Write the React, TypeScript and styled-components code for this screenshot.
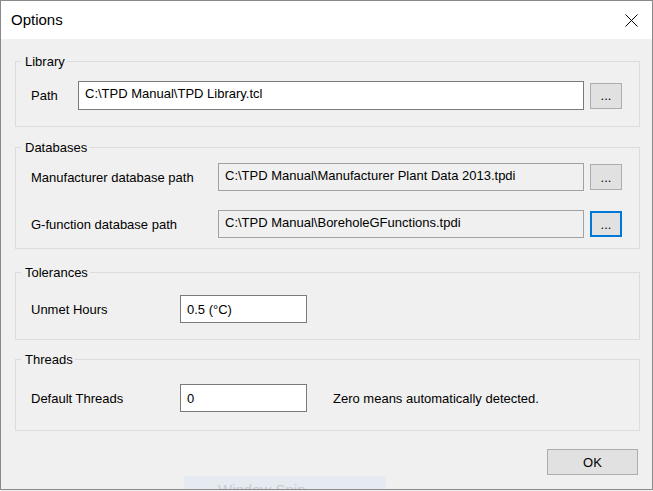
import React from 'react'
import styled, { createGlobalStyle } from 'styled-components'

const GlobalStyle = createGlobalStyle`
  html, body {
    margin: 0;
    padding: 0;
    background: #f0f0f0;
  }
  body {
    font-family: "Liberation Sans", Arial, sans-serif;
    font-size: 13px;
    color: #000;
  }
  * {
    box-sizing: border-box;
  }
`;

const Window = styled.div`
  position: relative;
  width: 653px;
  height: 490px;
  border: 1px solid #8a8a8a;
  background: #f0f0f0;
  display: flex;
  flex-direction: column;
  overflow: hidden;
`;

const TitleBar = styled.div`
  height: 38px;
  flex: 0 0 38px;
  background: #ffffff;
  display: flex;
  align-items: center;
  justify-content: space-between;
  padding: 0 14px 0 10px;
`;

const Title = styled.span`
  font-size: 15px;
  line-height: 18px;
  color: #000;
`;

const CloseIcon = styled.svg`
  display: block;
  width: 13px;
  height: 13px;
`;

const Content = styled.div`
  display: flex;
  flex-direction: column;
  padding: 0 12px 0 14px;
`;

const Group = styled.fieldset<{ $mt: number; $pt: number; $pb: number }>`
  margin: ${p => p.$mt}px 0 0 0;
  min-width: 0;
  border: 1px solid #dcdcdc;
  padding: ${p => p.$pt}px 17px ${p => p.$pb}px 15px;
`;

const Legend = styled.legend`
  font-size: 13px;
  line-height: 15px;
  height: 15px;
  padding: 0 2px 0 4px;
  margin-left: -10px;
  color: #000;
`;

const Rows = styled.div`
  display: flex;
  flex-direction: column;
  gap: 19px;
`;

const Row = styled.div<{ $cols: string; $gap?: number }>`
  display: grid;
  grid-template-columns: ${p => p.$cols};
  column-gap: ${p => p.$gap ?? 6}px;
  align-items: center;
`;

const Label = styled.span`
  font-size: 13px;
  line-height: 15px;
  white-space: nowrap;
`;

const TextBox = styled.input<{ $h?: number; $grey?: boolean; $mid?: boolean }>`
  display: block;
  width: 100%;
  height: ${p => p.$h ?? 28}px;
  margin: 0;
  border: 1px solid ${p => (p.$grey ? '#a2a2a2' : '#7a7a7a')};
  background: ${p => (p.$grey ? '#f0f0f0' : '#ffffff')};
  font-family: "Liberation Sans", Arial, sans-serif;
  font-size: 13px;
  color: #000;
  padding: ${p => (p.$mid ? '0 6px' : '0 6px 4px 6px')};
  outline: none;
`;

const BrowseButton = styled.button<{ $focused?: boolean }>`
  width: 32px;
  height: 26px;
  margin: 0;
  padding: 0;
  background: #e1e1e1;
  border: ${p => (p.$focused ? '2px solid #0078d7' : '1px solid #adadad')};
  font-family: "Liberation Sans", Arial, sans-serif;
  font-size: 13px;
  line-height: 15px;
  color: #000;
`;

const Note = styled.span`
  font-size: 13px;
  line-height: 15px;
  white-space: nowrap;
`;

const Footer = styled.div`
  display: flex;
  justify-content: flex-end;
  margin-top: 18px;
  padding-right: 2px;
`;

const OkButton = styled.button`
  width: 91px;
  height: 26px;
  margin: 0;
  padding: 0;
  background: #e1e1e1;
  border: 1px solid #adadad;
  font-family: "Liberation Sans", Arial, sans-serif;
  font-size: 13px;
  color: #000;
`;

const SnipTip = styled.div`
  position: absolute;
  left: 183px;
  top: 475px;
  width: 202px;
  height: 13px;
  overflow: hidden;
  background: #e6ebf1;
  padding: 5px 0 0 34px;
  font-family: "Liberation Sans", Arial, sans-serif;
  font-size: 15px;
  line-height: 17px;
  color: #c6cbd1;
  white-space: nowrap;
`;

export default function App() {
  return (
    <>
      <GlobalStyle />
      <Window>
        <TitleBar>
          <Title>Options</Title>
          <CloseIcon viewBox="0 0 13 13">
            <path d="M0.5 0.5 L12.5 12.5 M12.5 0.5 L0.5 12.5" stroke="#000" strokeWidth="1" fill="none" />
          </CloseIcon>
        </TitleBar>
        <Content>
          <Group $mt={15} $pt={12} $pb={16}>
            <Legend>Library</Legend>
            <Row $cols="41px 1fr 32px">
              <Label>Path</Label>
              <TextBox $h={29} readOnly value={'C:\\TPD Manual\\TPD Library.tcl'} />
              <BrowseButton>...</BrowseButton>
            </Row>
          </Group>

          <Group $mt={13} $pt={8} $pb={10}>
            <Legend>Databases</Legend>
            <Rows>
              <Row $cols="181px 1fr 32px">
                <Label>Manufacturer database path</Label>
                <TextBox $grey readOnly value={'C:\\TPD Manual\\Manufacturer Plant Data 2013.tpdi'} />
                <BrowseButton>...</BrowseButton>
              </Row>
              <Row $cols="181px 1fr 32px">
                <Label>G-function database path</Label>
                <TextBox $grey readOnly value={'C:\\TPD Manual\\BoreholeGFunctions.tpdi'} />
                <BrowseButton $focused>...</BrowseButton>
              </Row>
            </Rows>
          </Group>

          <Group $mt={16} $pt={15} $pb={16}>
            <Legend>Tolerances</Legend>
            <Row $cols="149px 127px" $gap={0}>
              <Label>Unmet Hours</Label>
              <TextBox $mid readOnly value="0.5 (°C)" />
            </Row>
          </Group>

          <Group $mt={12} $pt={17} $pb={18}>
            <Legend>Threads</Legend>
            <Row $cols="149px 127px auto" $gap={0}>
              <Label>Default Threads</Label>
              <TextBox $mid readOnly value="0" />
              <Note style={{ marginLeft: 26 }}>Zero means automatically detected.</Note>
            </Row>
          </Group>

          <Footer>
            <OkButton>OK</OkButton>
          </Footer>
        </Content>
        <SnipTip>Window Snip</SnipTip>
      </Window>
    </>
  )
}
